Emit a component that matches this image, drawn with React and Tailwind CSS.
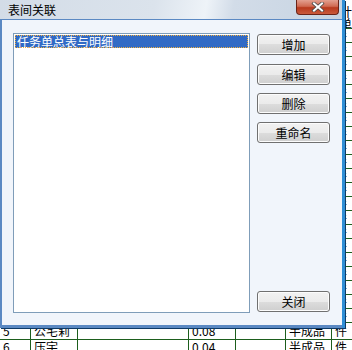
import React from "react";

const G = "border-[#1d5e1d]";

function Row({ cells, h = "h-[14px]", pt = "" }) {
  const widths = ["w-[31px]", "w-[47px]", "w-[111px]", "w-[47px]", "w-[50px]", "w-[46px]", "flex-1"];
  return (
    <div className={`flex ${h} border-b ${G} shrink-0`}>
      {widths.map((w, i) => (
        <div
          key={i}
          className={`${w} ${i < 6 ? `border-r ${G}` : ""} overflow-hidden whitespace-pre pl-[3px] ${pt} text-[12px] leading-[13px] text-black shrink-0`}
        >
          {cells[i] || ""}
        </div>
      ))}
    </div>
  );
}

function Btn({ children, className = "" }) {
  return (
    <button
      className={`h-[21px] w-[73px] shrink-0 rounded-[3px] border border-[#707070] bg-[linear-gradient(to_bottom,#f2f2f2_0%,#ebebeb_50%,#dddddd_50%,#cfcfcf_100%)] text-[12px] leading-[19px] text-black shadow-[inset_0_0_0_1px_#fcfcfc] ${className}`}
    >
      {children}
    </button>
  );
}

export default function App() {
  const rows = [];
  for (let i = 0; i < 21; i++) {
    rows.push(<Row key={i} cells={["", "", "", "", "", "", "件"]} />);
  }
  return (
    <div
      className="relative w-[352px] h-[350px] overflow-hidden bg-white"
      style={{ fontFamily: '"Noto Sans CJK SC", "Liberation Sans", sans-serif' }}
    >
      {/* spreadsheet behind */}
      <div className="flex flex-col">
        <div className={`flex h-[29px] border-b ${G} shrink-0`}>
          <div className="w-[332px] shrink-0" />
          <div className="flex-1 pl-[8px] pt-[6px] text-[12px] leading-[12px] whitespace-pre text-black overflow-hidden">
            {"计\n单"}
          </div>
        </div>
        {rows}
        <Row h="h-[17px]" pt="pt-[1px]" cells={["5", "公宅莉", "", "0.08", "", "半成品", "件"]} />
        <Row cells={["6", "压宇", "", "0.04", "", "半成品", "件"]} />
      </div>

      {/* dialog window */}
      <div className="absolute left-0 top-0 w-[345px] h-[328px] flex flex-col border-r-[3px] border-r-[#2f8fd6] shadow-[1px_1px_0_#0e3a66]">
        <div className="h-[19px] shrink-0 flex items-start justify-between bg-[linear-gradient(100deg,#d3dce7_0%,#dbe3ec_45%,#eef3f8_60%,#d2dce8_68%,#c7d4e2_100%)]">
          <span className="pl-[8px] pt-[3px] text-[12px] leading-[14px] text-black">表间关联</span>
          <div className="mr-[3px] h-[15px] w-[43px] rounded-b-[4px] border border-t-0 border-[#6b2418] bg-[linear-gradient(to_bottom,#e3a090_0%,#d06a52_45%,#b8391d_55%,#c95a3c_100%)] flex items-center justify-center">
            <svg width="14" height="10" viewBox="0 0 14 10">
              <path d="M3 1.5 L11 8.5 M11 1.5 L3 8.5" stroke="#4a4a4a" strokeWidth="3.6" strokeLinecap="square" />
              <path d="M3 1.5 L11 8.5 M11 1.5 L3 8.5" stroke="#ffffff" strokeWidth="2" strokeLinecap="square" />
            </svg>
          </div>
        </div>
        <div className="flex-1 flex border-t border-l-2 border-b-[3px] border-[#5b89c3] bg-[#f1f5fb] pl-[11px] pt-[13px] pb-[12px]">
          <div className="w-[237px] h-[280px] shrink-0 border border-[#7f9db9] bg-white p-[1px]">
            <div className="h-[13px] bg-[#316ac5] outline-1 outline-dotted outline-[#f0b040] -outline-offset-1 pl-[2px] text-[12px] leading-[13px] text-white">
              任务单总表与明细
            </div>
          </div>
          <div className="ml-[7px] flex flex-col gap-[8px] pt-[1px]">
            <Btn>增加</Btn>
            <Btn className="mt-[1px]">编辑</Btn>
            <Btn>删除</Btn>
            <Btn>重命名</Btn>
            <Btn className="mt-auto mb-[1px]">关闭</Btn>
          </div>
        </div>
      </div>
    </div>
  );
}
